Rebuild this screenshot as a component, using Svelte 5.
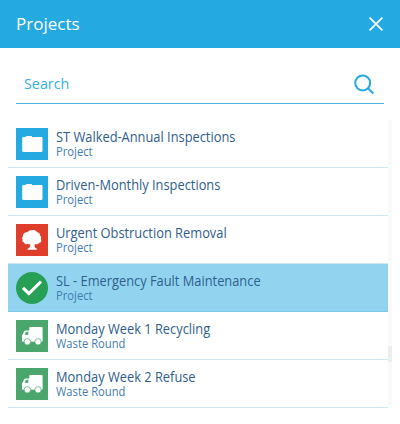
<script>
  let search = $state('')
  let selected = $state(4)

  const projects = [
    { id: 1, name: 'ST Walked-Annual Inspections', type: 'Project', icon: 'folder' },
    { id: 2, name: 'Driven-Monthly Inspections', type: 'Project', icon: 'folder' },
    { id: 3, name: 'Urgent Obstruction Removal', type: 'Project', icon: 'tree' },
    { id: 4, name: 'SL - Emergency Fault Maintenance', type: 'Project', icon: 'folder' },
    { id: 5, name: 'Monday Week 1 Recycling', type: 'Waste Round', icon: 'truck' },
    { id: 6, name: 'Monday Week 2 Refuse', type: 'Waste Round', icon: 'truck' }
  ]

  let visible = $derived(projects.filter((p) => p.name.toLowerCase().includes(search.toLowerCase())))
</script>

<div class="panel">
  <header>
    <h1>Projects</h1>
    <button class="close" aria-label="Close">
      <svg width="16" height="16" viewBox="0 0 16 16">
        <path d="M1.6 1.6 14.4 14.4M14.4 1.6 1.6 14.4" />
      </svg>
    </button>
  </header>

  <label class="search">
    <input type="text" placeholder="Search" bind:value={search} />
    <svg width="22" height="22" viewBox="0 0 22 22">
      <circle cx="8.700" cy="10" r="7.500" />
      <path d="M13.900 15.200 19.300 20.500" />
    </svg>
  </label>

  <div class="scroller">
    <ul>
      {#each visible as project (project.id)}
        {@const active = project.id === selected}
        <li class:active>
          <button class="row" onclick={() => (selected = project.id)}>
            <svg class="icon" width="32" height="32" viewBox="0 0 32 32">
              {#if active}
                <circle cx="16" cy="16" r="16" fill="#279f57" />
                <path d="M7 15.800 12.900 21.600 25 9.500" fill="none" stroke="#fff" stroke-width="3.1" />
              {:else if project.icon === 'folder'}
                <rect width="32" height="32" fill="#25a9e1" />
                <path d="M6.200 10q0-1 1-1h2.300l.9-1h5l.9 1h9q1.200 0 1.200 1.200v12.600q0 1.200-1.200 1.200H7.400q-1.200 0-1.200-1.200z" fill="#fff" />
              {:else if project.icon === 'tree'}
                <rect width="32" height="32" fill="#e03e2d" />
                <path
                  d="M11.500 8.200C12.300 6.400 14.200 5.700 16 6.400c2-.8 4.200.1 4.900 1.900 2 .1 3.400 1.500 3.100 3.300 1.400 1 1.500 2.300.8 3.400 1.200 1.900.1 3.900-1.900 3.900-.5 1.300-2.200 1.800-3.400 1-.5.4-.7.500-1 .5.1 2 .3 3.400 1.600 3.800l.7.5v1H11.600v-1l1-.5c1.500-.5 1.900-2.300 1.700-4.100-.8.500-1.900.500-2.500-.3-1.500.9-3.300.2-3.700-1.400-1.500-.3-2.300-1.600-1.500-2.800-.8-1.300-.6-2.500.5-3.300-.4-2.400 1.800-4.500 4.400-4.100z"
                  fill="#fff"
                />
              {:else}
                <rect width="32" height="32" fill="#4aa66c" />
                <path
                  fill-rule="evenodd"
                  d="M13.300 7.800q0-.8.800-.8h11.700q.8 0 .8.800v13.200q0 .8-.8.800H6.800q-.8 0-.8-.8v-5q0-.5.3-.9l2.200-4q.4-.7 1.200-.7h3.600zM12.300 11.700h-1.800q-.4 0-.6.4L8.700 14.800h3.600z"
                  fill="#fff"
                />
                <circle cx="11.300" cy="21.800" r="3.200" fill="#fff" stroke="#4aa66c" stroke-width=".7" />
                <circle cx="22" cy="21.800" r="3.200" fill="#fff" stroke="#4aa66c" stroke-width=".7" />
              {/if}
            </svg>
            <span class="text">
              <span class="name">{project.name}</span>
              <span class="type">{project.type}</span>
            </span>
          </button>
        </li>
      {/each}
    </ul>
    <div class="track"><div class="thumb"></div></div>
  </div>
</div>

<style>
  :global(body) {
    background: #fff;
  }

  .panel {
    width: 400px;
    height: 424px;
    font-family: 'Open Sans', 'Noto Sans', sans-serif;
    background: #fff;
  }

  header {
    display: flex;
    align-items: center;
    justify-content: space-between;
    height: 48px;
    padding: 0 16px;
    box-sizing: border-box;
    background: #25a9e1;
    color: #fff;
  }

  h1 {
    margin: 0;
    font-size: 17px;
    font-weight: 500;
    line-height: 24px;
  }

  button {
    border: 0;
    padding: 0;
    background: none;
    font: inherit;
    text-align: left;
    cursor: pointer;
  }

  .close {
    display: flex;
  }

  .close svg {
    fill: none;
    stroke: #fff;
    stroke-width: 1.7;
  }

  .search {
    display: flex;
    align-items: center;
    height: 40px;
    margin: 16px 16px 0;
    padding: 0 8px;
    box-sizing: border-box;
    border-bottom: 1px solid #4bb5e3;
  }

  .search input {
    flex: 1;
    min-width: 0;
    padding: 0 0 1px;
    border: 0;
    outline: 0;
    font-family: inherit;
    font-size: 15px;
    color: #25a9e1;
    transform: scaleX(0.955);
    transform-origin: left;
  }

  .search input::placeholder {
    color: #35b0e3;
    opacity: 1;
  }

  .search svg {
    fill: none;
    stroke: #25a9e1;
    stroke-width: 2;
  }

  .scroller {
    display: flex;
    width: 384px;
    height: 288px;
    margin: 16px 0 0 8px;
  }

  ul {
    flex: 1;
    margin: 0;
    padding: 0;
    list-style: none;
  }

  li {
    height: 48px;
    box-sizing: border-box;
    border-bottom: 1px solid #cde7f5;
  }

  li.active {
    background: #92d4f0;
    border-bottom-color: #7ccaea;
  }

  .row {
    display: flex;
    align-items: center;
    gap: 8px;
    width: 100%;
    height: 48px;
    padding: 0 8px;
  }

  .icon {
    flex-shrink: 0;
  }

  .text {
    display: flex;
    flex-direction: column;
  }

  .name,
  .type {
    transform-origin: left;
    white-space: nowrap;
  }

  .name {
    font-size: 14px;
    line-height: 16px;
    color: #2f608d;
    transform: scaleX(0.917);
  }

  .type {
    font-size: 12px;
    line-height: 14px;
    color: #3f7cb1;
    transform: scaleX(0.935);
  }

  .track {
    width: 4px;
    background: #fafafa;
  }

  .thumb {
    height: 16px;
    margin-top: 226px;
    background: #ededed;
  }
</style>
